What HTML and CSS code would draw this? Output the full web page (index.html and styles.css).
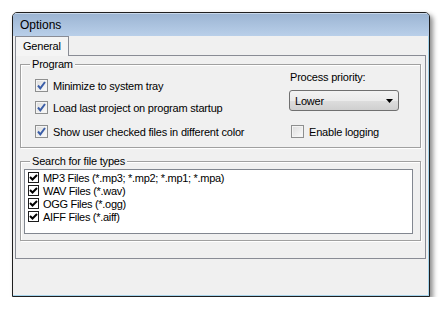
FILE: index.html
```html
<!DOCTYPE html>
<html>
<head>
<meta charset="utf-8">
<link rel="stylesheet" href="styles.css">
</head>
<body>
<div class="window">
  <div class="titlebar">Options</div>
  <div class="client">
    <div class="tabs">
      <div class="tab">General</div>
    </div>
    <div class="panel">
      <div class="group group-program">
        <span class="legend">Program</span>
        <div class="program-cols">
          <div class="col-left">
            <label class="cb row1"><span class="box checked"><svg width="13" height="13" viewBox="0 0 13 13"><path d="M3 6.5 L5.3 9.3 L10 3" fill="none" stroke="#3b5ea8" stroke-width="2"/></svg></span>Minimize to system tray</label>
            <label class="cb row2"><span class="box checked"><svg width="13" height="13" viewBox="0 0 13 13"><path d="M3 6.5 L5.3 9.3 L10 3" fill="none" stroke="#3b5ea8" stroke-width="2"/></svg></span>Load last project on program startup</label>
            <label class="cb row3"><span class="box checked"><svg width="13" height="13" viewBox="0 0 13 13"><path d="M3 6.5 L5.3 9.3 L10 3" fill="none" stroke="#3b5ea8" stroke-width="2"/></svg></span>Show user checked files in different color</label>
          </div>
          <div class="col-right">
            <div class="prio-label">Process priority:</div>
            <div class="combo"><span>Lower</span><svg width="7" height="4" viewBox="0 0 7 4"><path d="M0 0 H7 L3.5 4 Z" fill="#000"/></svg></div>
            <label class="cb row-log"><span class="box"></span>Enable logging</label>
          </div>
        </div>
      </div>
      <div class="group group-search">
        <span class="legend">Search for file types</span>
        <div class="listbox">
          <div class="item"><span class="fbox"><svg width="9" height="9" viewBox="0 0 9 9"><path d="M1 4 L3.5 6.5 L8 2" fill="none" stroke="#000" stroke-width="2"/></svg></span>MP3 Files (*.mp3; *.mp2; *.mp1; *.mpa)</div>
          <div class="item"><span class="fbox"><svg width="9" height="9" viewBox="0 0 9 9"><path d="M1 4 L3.5 6.5 L8 2" fill="none" stroke="#000" stroke-width="2"/></svg></span>WAV Files (*.wav)</div>
          <div class="item"><span class="fbox"><svg width="9" height="9" viewBox="0 0 9 9"><path d="M1 4 L3.5 6.5 L8 2" fill="none" stroke="#000" stroke-width="2"/></svg></span>OGG Files (*.ogg)</div>
          <div class="item"><span class="fbox"><svg width="9" height="9" viewBox="0 0 9 9"><path d="M1 4 L3.5 6.5 L8 2" fill="none" stroke="#000" stroke-width="2"/></svg></span>AIFF Files (*.aiff)</div>
        </div>
      </div>
    </div>
  </div>
</div>
</body>
</html>
```
FILE: styles.css
```css
html, body {
  margin: 0;
  padding: 0;
  background: #ffffff;
}
body {
  font-family: "Liberation Sans", Arial, sans-serif;
  font-size: 11px;
  letter-spacing: -0.2px;
  color: #000;
}
.window {
  margin: 12px 0 0 12px;
  width: 416px;
  height: 283px;
  border: 1px solid #1f1f1f;
  border-radius: 5px 5px 0 0;
  background: #f0f0f0;
  box-shadow: inset -1px -1px 0 #a6d4ec, 3px 3px 5px rgba(0,0,0,0.45);
  display: flex;
  flex-direction: column;
  overflow: hidden;
}
.titlebar {
  height: 22px;
  line-height: 23px;
  padding-left: 7px;
  font-size: 12px;
  letter-spacing: 0;
  background: linear-gradient(#9cb5d3, #b9cfe9);
  border-top: 1px solid #c8d8ea;
}
.client {
  padding: 0 3px 0 2px;
  display: flex;
  flex-direction: column;
}
.tabs {
  display: flex;
  height: 20px;
  position: relative;
  z-index: 1;
}
.tab {
  width: 54px;
  height: 20px;
  border: 1px solid #898c95;
  border-bottom: none;
  background: #f4f4f4;
  padding-left: 7px;
  line-height: 19px;
  box-sizing: border-box;
}
.panel {
  border: 1px solid #898c95;
  height: 194px;
  margin-top: -1px;
  display: flex;
  flex-direction: column;
  padding: 8px 4px 0 4px;
  gap: 13px;
}
.group {
  position: relative;
  border: 1px solid #a0a0a0;
  box-shadow: inset 1px 1px 0 #fff, 1px 1px 0 #fff;
}
.legend {
  position: absolute;
  top: -8px;
  left: 9px;
  padding: 0 2px;
  background: #f0f0f0;
  line-height: 14px;
}
.group-program {
  height: 82px;
}
.program-cols {
  display: flex;
  padding: 14px 0 0 14px;
}
.col-left {
  width: 254px;
  display: flex;
  flex-direction: column;
}
.cb {
  display: flex;
  align-items: center;
  height: 13px;
  gap: 5px;
  white-space: nowrap;
}
.row2 { margin-top: 9px; }
.row3 { margin-top: 11px; }
.box {
  width: 13px;
  height: 13px;
  box-sizing: border-box;
  border: 1px solid #8e8f8f;
  background: linear-gradient(135deg, #dcdcdc, #fbfbfb);
  box-shadow: inset 0 0 0 1px #f4f4f4;
  flex: none;
  position: relative;
}
.box svg {
  position: absolute;
  left: -1px;
  top: -1px;
}
.col-right {
  display: flex;
  flex-direction: column;
  margin-top: -9px;
}
.prio-label {
  height: 14px;
  line-height: 14px;
  padding-left: 1px;
}
.combo {
  margin-top: 6px;
  width: 110px;
  height: 21px;
  box-sizing: border-box;
  border: 1px solid #707070;
  border-radius: 3px;
  background: linear-gradient(#f3f3f3 0%, #ebebeb 50%, #dddddd 51%, #cfcfcf 100%);
  display: flex;
  align-items: center;
  justify-content: space-between;
  padding: 0 5px 0 5px;
}
.row-log {
  margin-top: 14px;
  padding-left: 2px;
}
.group-search {
  height: 78px;
}
.listbox {
  margin: 7px 7px 0 3px;
  height: 65px;
  box-sizing: border-box;
  border: 1px solid #828790;
  background: #fff;
  padding: 1px 0 0 3px;
}
.item {
  height: 13px;
  display: flex;
  align-items: center;
  gap: 4px;
  white-space: nowrap;
  letter-spacing: -0.3px;
}
.fbox {
  width: 11px;
  height: 11px;
  box-sizing: border-box;
  border: 1px solid #1c1c1c;
  background: #fff;
  display: flex;
  align-items: center;
  justify-content: center;
  flex: none;
}
```
